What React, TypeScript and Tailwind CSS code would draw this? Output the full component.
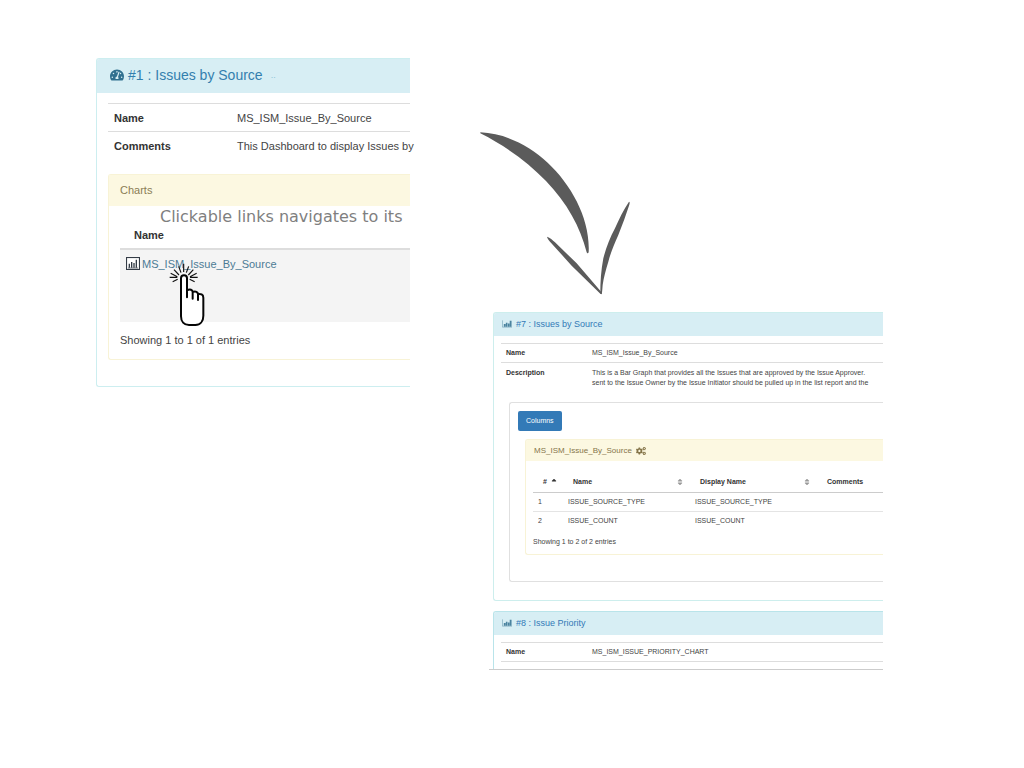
import type { ReactNode } from 'react';
import { FaCogs, FaSort, FaSortUp, FaTachometerAlt } from 'react-icons/fa';

function BarChartIcon({ className }: { className?: string }) {
  return (
    <svg viewBox="0 0 22 16" className={className} aria-hidden="true">
      <path d="M1 0v15h21" fill="none" stroke="currentColor" strokeOpacity="0.6" strokeWidth="1.4" />
      <path d="M4 8h4v6H4zM8.500 5h3.500v9H8.500zM13 7h3.500v7H13zM17 1h4v13h-4z" fill="currentColor" fillOpacity="0.85" />
    </svg>
  );
}

function FramedChartIcon() {
  return (
    <svg viewBox="0 0 42 39" className="h-[13px] w-[14px] shrink-0 text-[#333b45]" aria-hidden="true">
      <rect x="1.500" y="1.500" width="39" height="36" fill="#fff" stroke="currentColor" strokeWidth="3.500" />
      <path d="M8 20h4v12H8zM15 15h4v17h-4zM22 18h4v14h-4zM29 8h4v24h-4z" fill="currentColor" />
      <path d="M6 33h30" stroke="currentColor" strokeWidth="2" />
    </svg>
  );
}

function PointerHand() {
  return (
    <svg viewBox="0 0 120 198" className="absolute left-12 top-[13px] h-[66px] w-10" aria-hidden="true">
      <path
        d="M39 47c0-12 18-12 18 0v50V86c9-5 17-2 17 6v-3c9-4 16 0 16 7v-3c8-1 16 1 16 11v54c0 17-9 28-24 28H63c-15 0-24-11-24-26z"
        fill="#fff"
      />
      <path
        d="M57 103V46c0-12-18-12-18 0v114c0 15 9 26 24 26h19c15 0 24-11 24-28V104c0-10-8-12-16-11M57 82c9-5 17-2 17 6v19M74 87c9-4 16 0 16 7v17"
        fill="none"
        stroke="#050505"
        strokeWidth="6"
        strokeLinecap="round"
        strokeLinejoin="round"
      />
      <path
        d="M47 2v25M32 10l7 19M18 20l15 16M8 31l20 10M5 43h23M14 56l15-7M62 10l-7 19M76 20L61 36M86 31L66 41M89 43H66M80 56l-15-7"
        stroke="#111"
        strokeWidth="3.500"
      />
    </svg>
  );
}

function CurvedArrow() {
  return (
    <svg viewBox="0 0 450 495" className="h-[165px] w-[150px]" fill="#5b5b5b" aria-hidden="true">
      <path d="M1 7C75 10 147 46 203 98C275 165 331 268 326 366C325 371 321 371 320 367C300 290 262 220 198 153C145 98 80 50 1 10z" />
      <path d="M201 320c9 3 17 10 24 17l65 63 74 86 2 7-5-2-86-84-65-72c-4-5-8-10-9-15z" />
      <path d="M361 491c0-36 2-70 9-106 8-32 20-62 35-90 12-28 26-56 42-80 3 0 2 5 1 9-10 31-21 61-33 91-12 26-23 53-30 80-8 26-14 48-17 70-1 10-1 19-3 27z" />
    </svg>
  );
}

function PanelTitle({ children }: { children: ReactNode }) {
  return (
    <h2 className="flex h-[23px] items-center gap-1 bg-[#d7eef4] pb-[2px] pl-2 text-[9px] text-[#337ab7]">
      <BarChartIcon className="h-2 w-[10px] text-[#31708f]" />
      <a href="#chart">{children}</a>
    </h2>
  );
}

function DashboardPanel() {
  return (
    <section className="mt-[58px] rounded-l-[3px] border border-r-0 border-[#cdeef0] text-[11px] leading-4 text-[#444]">
      <h1 className="flex h-[34px] items-center gap-1 rounded-tl-[2px] bg-[#d7eef4] pb-[2px] pl-[13px] text-[14px] text-[#31708f]">
        <FaTachometerAlt className="size-[14px]" />
        <a href="#dashboard" className="text-[#337fae]">#1 : Issues by Source</a>
        <span className="pl-1 text-[9px] text-[#8fc3d5]">..</span>
      </h1>
      <div className="pb-[26px] pl-[11px] pt-[10px]">
        <table className="w-full table-fixed border-collapse text-left">
          <tbody>
            <tr className="h-7 border-t border-[#ddd]">
              <th className="w-[124px] pl-[6px] text-[#333]">Name</th>
              <td className="pl-[5px]">MS_ISM_Issue_By_Source</td>
            </tr>
            <tr className="h-7 border-t border-[#ddd]">
              <th className="pl-[6px] text-[#333]">Comments</th>
              <td className="whitespace-nowrap pl-[5px]">This Dashboard to display Issues by</td>
            </tr>
          </tbody>
        </table>
        <div className="mt-[14px] rounded-l-[3px] border border-r-0 border-[#f8f3d6]">
          <h2 className="flex h-[31px] items-center bg-[#fcf8e1] pl-[11px] text-[#8a7d55]">Charts</h2>
          <p className="whitespace-nowrap pl-[51px] pt-[2px] font-['DejaVu_Sans'] text-[16px] leading-[18px] text-[#7f7f7f]">
            Clickable links navigates to its
          </p>
          <div className="pl-[11px]">
            <table className="w-full border-collapse text-left">
              <thead>
                <tr className="h-[23px] border-b-2 border-[#ddd]">
                  <th className="pb-1 pl-[14px] text-[#333]">Name</th>
                </tr>
              </thead>
              <tbody>
                <tr className="h-[73px] bg-[#f4f4f4]">
                  <td className="relative pl-[6px] pt-[6px] align-top">
                    <a href="#source-chart" className="flex items-center gap-[2px] text-[#4c7b94]">
                      <FramedChartIcon />
                      MS_ISM_Issue_By_Source
                    </a>
                    <PointerHand />
                  </td>
                </tr>
              </tbody>
            </table>
            <p className="pb-[11px] pt-[10px]">Showing 1 to 1 of 1 entries</p>
          </div>
        </div>
      </div>
    </section>
  );
}

const columns = [
  { id: 1, name: 'ISSUE_SOURCE_TYPE', display: 'ISSUE_SOURCE_TYPE' },
  { id: 2, name: 'ISSUE_COUNT', display: 'ISSUE_COUNT' },
];

function ColumnsTable() {
  return (
    <table className="mt-3 w-full table-fixed border-collapse text-left">
      <thead>
        <tr className="h-[19px] border-b border-[#ccc] text-[#333]">
          <th className="w-[30px] pl-[10px]">
            <span className="flex items-center gap-1">
              # <FaSortUp className="h-2 w-[6px]" />
            </span>
          </th>
          <th className="w-[127px] pl-[10px] pr-[7px]">
            <span className="flex items-center justify-between">
              Name <FaSort className="h-2 w-[6px] text-[#999]" />
            </span>
          </th>
          <th className="w-[127px] pl-[10px] pr-[7px]">
            <span className="flex items-center justify-between">
              Display Name <FaSort className="h-2 w-[6px] text-[#999]" />
            </span>
          </th>
          <th className="pl-[10px]">Comments</th>
        </tr>
      </thead>
      <tbody>
        {columns.map((c, i) => (
          <tr key={c.id} className={i > 0 ? 'h-[19px] border-t border-[#e4e4e4]' : 'h-[19px]'}>
            <td className="pl-[5px]">{c.id}</td>
            <td className="pl-[5px]">{c.name}</td>
            <td className="pl-[5px]">{c.display}</td>
            <td />
          </tr>
        ))}
      </tbody>
    </table>
  );
}

function ChartPanels() {
  return (
    <div className="ml-[9px] mt-[17px] border-b border-[#ccc] pl-1 text-[7px] leading-[10px] text-[#444]">
      <section className="overflow-hidden rounded-l-[3px] border border-r-0 border-[#cdeeed]">
        <PanelTitle>#7 : Issues by Source</PanelTitle>
        <div className="pb-[18px] pl-[7px] pt-[7px]">
          <table className="w-full table-fixed border-collapse text-left">
            <tbody>
              <tr className="h-[19px] border-t border-[#ddd]">
                <th className="w-[86px] pl-[5px] text-[#333]">Name</th>
                <td className="pl-[5px]">MS_ISM_Issue_By_Source</td>
              </tr>
              <tr className="border-t border-[#ddd] align-top">
                <th className="pl-[5px] pt-[5px] text-[#333]">Description</th>
                <td className="whitespace-nowrap pl-[5px] pt-[5px]">
                  This is a Bar Graph that provides all the Issues that are approved by the Issue Approver.
                  <br />
                  sent to the Issue Owner by the Issue Initiator should be pulled up in the list report and the
                </td>
              </tr>
            </tbody>
          </table>
          <div className="ml-2 mt-[14px] rounded-l-[3px] border border-r-0 border-[#e0e0e0] pb-[26px] pl-2 pt-2">
            <button type="button" className="block h-5 rounded-[2px] bg-[#337ab7] px-2 text-white">
              Columns
            </button>
            <div className="ml-[7px] mt-2 overflow-hidden rounded-l-[3px] border border-r-0 border-[#f8f3d6]">
              <h3 className="flex h-[21px] items-center gap-1 bg-[#fcf8e1] pl-2 text-[8px] text-[#85754a]">
                MS_ISM_Issue_By_Source <FaCogs className="h-2 w-[10px]" />
              </h3>
              <div className="pl-[7px]">
                <ColumnsTable />
                <p className="py-[7px]">Showing 1 to 2 of 2 entries</p>
              </div>
            </div>
          </div>
        </div>
      </section>
      <section className="mt-[10px] overflow-hidden rounded-tl-[3px] border-l border-t border-[#b9e4ea]">
        <PanelTitle>#8 : Issue Priority</PanelTitle>
        <div className="pb-[7px] pl-[7px] pt-[7px]">
          <table className="w-full table-fixed border-collapse text-left">
            <tbody>
              <tr className="h-[19px] border-y border-[#ddd]">
                <th className="w-[86px] pl-[5px] text-[#333]">Name</th>
                <td className="pl-[5px]">MS_ISM_ISSUE_PRIORITY_CHART</td>
              </tr>
            </tbody>
          </table>
        </div>
      </section>
    </div>
  );
}

export default function App() {
  return (
    <main className="grid min-h-screen grid-cols-[314fr_70fr_403fr] items-start bg-white pl-24 pr-[141px] font-['Liberation_Sans',sans-serif]">
      <DashboardPanel />
      <div />
      <div className="min-w-0 pt-[130px]">
        <CurvedArrow />
        <ChartPanels />
      </div>
    </main>
  );
}
